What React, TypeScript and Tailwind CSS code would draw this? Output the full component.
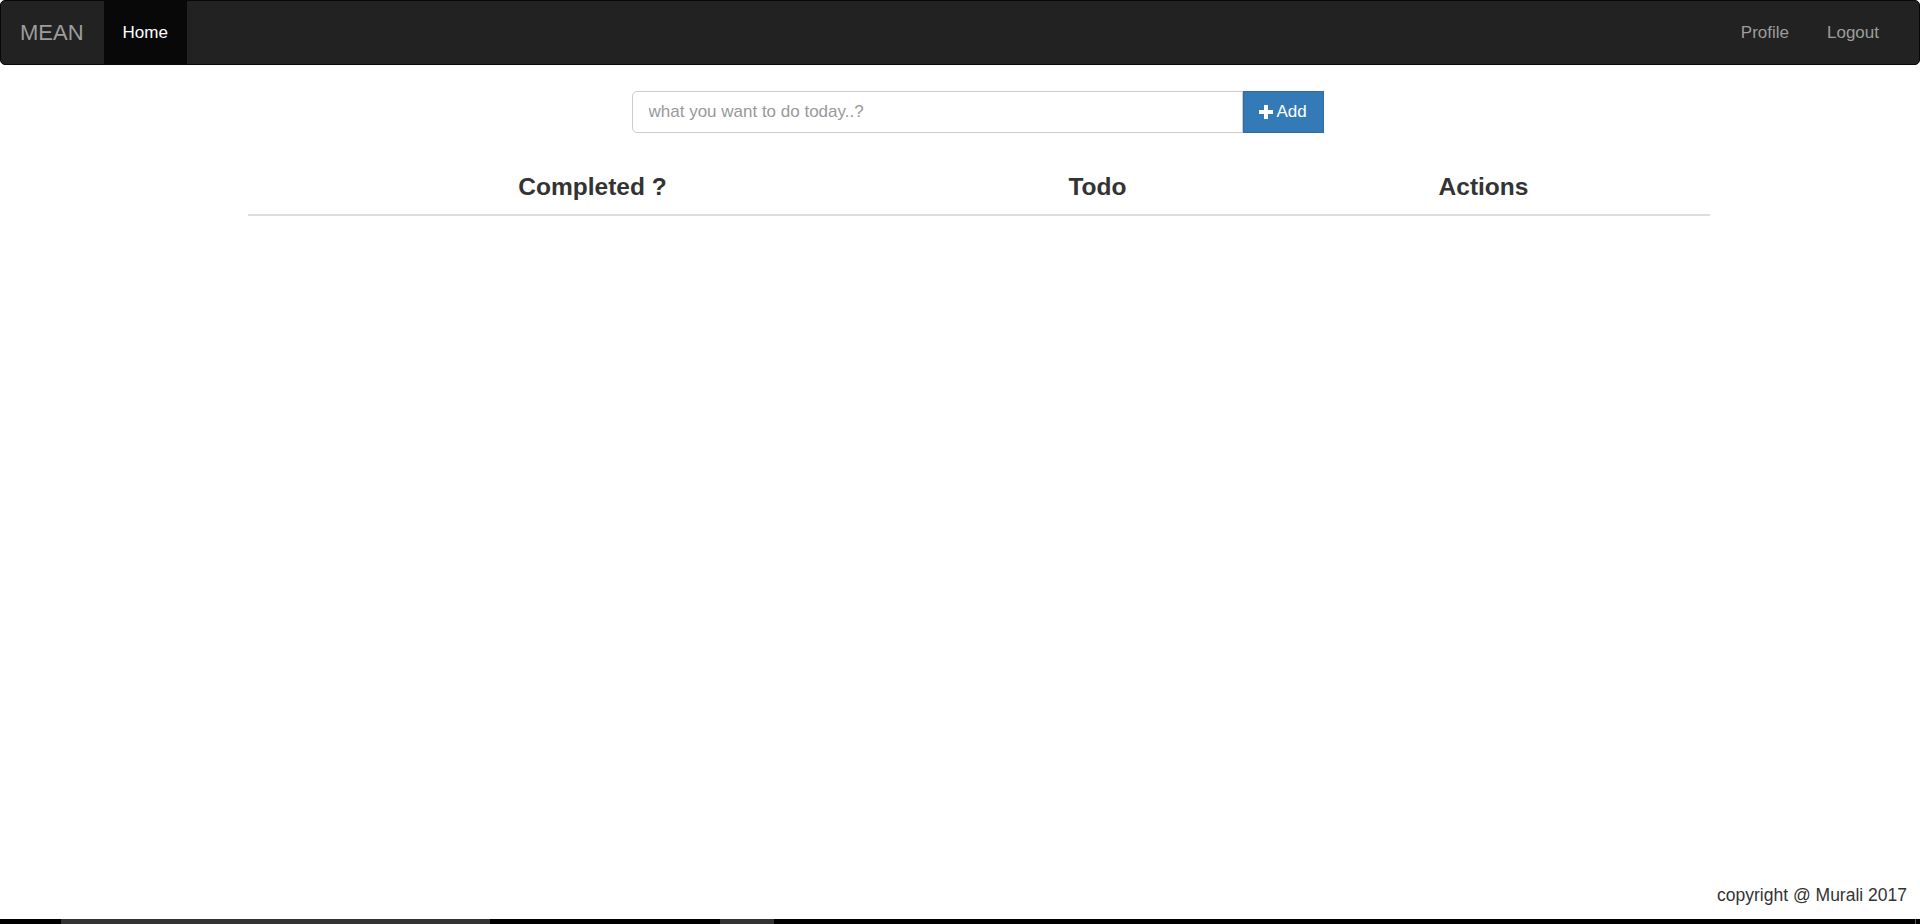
import React from "react";

function PlusIcon() {
  return (
    <svg width="14" height="14" viewBox="0 0 14 14" className="mr-[3px]">
      <rect x="5" y="0" width="4" height="14" fill="#fff" />
      <rect x="0" y="5" width="14" height="4" fill="#fff" />
    </svg>
  );
}

function Navbar() {
  return (
    <nav className="flex h-[65px] items-stretch justify-between rounded-[5px] border border-[#080808] bg-[#222]">
      <div className="flex items-stretch">
        <a className="flex items-center pl-[19px] pr-[20px] text-[22px] text-[#9d9d9d]">MEAN</a>
        <a className="flex items-center bg-[#080808] px-[19px] text-[17px] text-white">Home</a>
      </div>
      <div className="flex items-stretch pr-[21px]">
        <a className="flex items-center px-[19px] text-[17px] text-[#9d9d9d]">Profile</a>
        <a className="flex items-center px-[19px] text-[17px] text-[#9d9d9d]">Logout</a>
      </div>
    </nav>
  );
}

function AddTodo() {
  return (
    <div className="mx-auto mt-[26px] flex h-[42px] w-[692px] -translate-x-[1px]">
      <input
        placeholder="what you want to do today..?"
        className="h-full flex-1 rounded-l-[5px] border border-[#ccc] bg-white px-[16px] text-[17px] text-[#555] placeholder:text-[#999] outline-none"
      />
      <button className="flex h-full w-[81px] items-center justify-center border border-[#2e6da4] bg-[#337ab7] text-[17px] text-white">
        <PlusIcon />
        Add
      </button>
    </div>
  );
}

function TodoTable() {
  return (
    <div className="mx-auto mt-[30px] w-[1462px]">
      <div className="grid grid-cols-[690px_320px_452px] border-b-2 border-[#ddd] text-center text-[24.5px] font-bold leading-[27px] text-[#333]">
        <div className="pt-[10px] pb-[14px]">Completed ?</div>
        <div className="pt-[10px] pb-[14px]">Todo</div>
        <div className="pt-[10px] pb-[14px]">Actions</div>
      </div>
    </div>
  );
}

export default function App() {
  return (
    <div
      className="flex h-[924px] flex-col bg-white"
      style={{ fontFamily: '"Liberation Sans", Arial, sans-serif' }}
    >
      <Navbar />
      <main className="flex-1 pl-[37px]">
        <AddTodo />
        <TodoTable />
      </main>
      <footer className="pb-[12px] pr-[13px] text-right text-[17.5px] leading-[24px] text-[#333]">
        copyright @ Murali 2017
      </footer>
      <div className="flex h-[5px] bg-black">
        <div className="w-[61px]" />
        <div className="w-[429px] bg-[#333]" />
        <div className="w-[230px]" />
        <div className="w-[54px] bg-[#333]" />
        <div className="flex-1" />
        <div className="w-[1px] bg-[#555]" />
        <div className="w-[4px]" />
      </div>
    </div>
  );
}
